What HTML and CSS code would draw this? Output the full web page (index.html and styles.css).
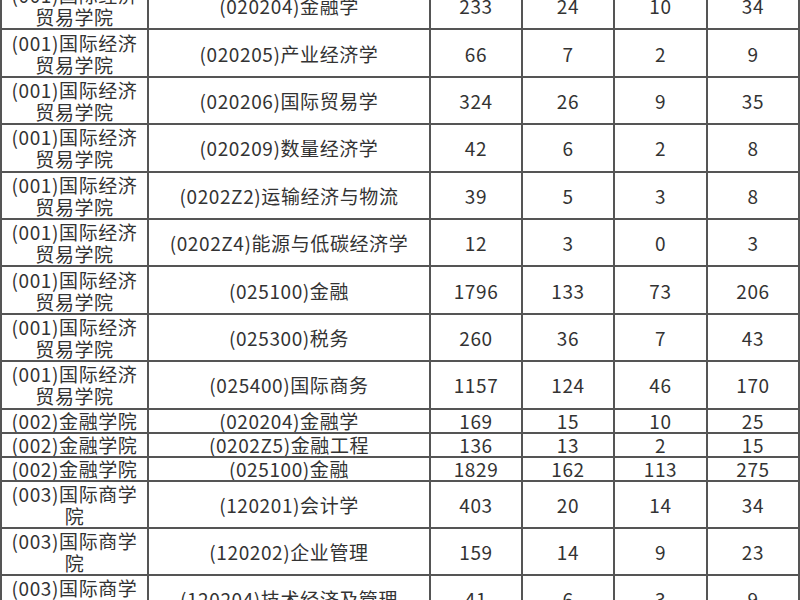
FILE: index.html
```html
<!DOCTYPE html>
<html lang="zh-CN">
<head>
<meta charset="utf-8">
<title>招生统计表</title>
<link rel="stylesheet" href="styles.css">
</head>
<body>
<table class="stats">
  <colgroup>
    <col class="c-school">
    <col class="c-major">
    <col class="c-num">
    <col class="c-num">
    <col class="c-num2">
    <col class="c-num">
  </colgroup>
  <tbody>
    <tr class="tall"><td>(001)国际经济<br>贸易学院</td><td>(020204)金融学</td><td>233</td><td>24</td><td>10</td><td>34</td></tr>
    <tr class="tall"><td>(001)国际经济<br>贸易学院</td><td>(020205)产业经济学</td><td>66</td><td>7</td><td>2</td><td>9</td></tr>
    <tr class="tall"><td>(001)国际经济<br>贸易学院</td><td>(020206)国际贸易学</td><td>324</td><td>26</td><td>9</td><td>35</td></tr>
    <tr class="tall"><td>(001)国际经济<br>贸易学院</td><td>(020209)数量经济学</td><td>42</td><td>6</td><td>2</td><td>8</td></tr>
    <tr class="tall"><td>(001)国际经济<br>贸易学院</td><td>(0202Z2)运输经济与物流</td><td>39</td><td>5</td><td>3</td><td>8</td></tr>
    <tr class="tall"><td>(001)国际经济<br>贸易学院</td><td>(0202Z4)能源与低碳经济学</td><td>12</td><td>3</td><td>0</td><td>3</td></tr>
    <tr class="tall"><td>(001)国际经济<br>贸易学院</td><td>(025100)金融</td><td>1796</td><td>133</td><td>73</td><td>206</td></tr>
    <tr class="tall"><td>(001)国际经济<br>贸易学院</td><td>(025300)税务</td><td>260</td><td>36</td><td>7</td><td>43</td></tr>
    <tr class="tall"><td>(001)国际经济<br>贸易学院</td><td>(025400)国际商务</td><td>1157</td><td>124</td><td>46</td><td>170</td></tr>
    <tr class="short"><td>(002)金融学院</td><td>(020204)金融学</td><td>169</td><td>15</td><td>10</td><td>25</td></tr>
    <tr class="short"><td>(002)金融学院</td><td>(0202Z5)金融工程</td><td>136</td><td>13</td><td>2</td><td>15</td></tr>
    <tr class="short"><td>(002)金融学院</td><td>(025100)金融</td><td>1829</td><td>162</td><td>113</td><td>275</td></tr>
    <tr class="tall"><td>(003)国际商学<br>院</td><td>(120201)会计学</td><td>403</td><td>20</td><td>14</td><td>34</td></tr>
    <tr class="tall"><td>(003)国际商学<br>院</td><td>(120202)企业管理</td><td>159</td><td>14</td><td>9</td><td>23</td></tr>
    <tr class="tall"><td>(003)国际商学<br>院</td><td>(120204)技术经济及管理</td><td>41</td><td>6</td><td>3</td><td>9</td></tr>
  </tbody>
</table>
</body>
</html>
```
FILE: styles.css
```css
html, body {
  margin: 0;
  padding: 0;
  background: #ffffff;
  overflow: hidden;
}

.stats {
  margin-top: -19px;
  width: 798px;
  table-layout: fixed;
  border-collapse: collapse;
  font-family: "Noto Sans CJK SC", "Noto Sans", sans-serif;
  font-size: 19px;
  line-height: 22px;
  letter-spacing: 0.6px;
  color: #333333;
}

.c-school { width: 147px; }
.c-major { width: 282px; }
.c-num { width: 92px; }
.c-num2 { width: 93px; }

.stats td {
  border: 2px solid #555555;
  padding: 1px 0 0 0;
  text-align: center;
  vertical-align: middle;
  white-space: nowrap;
  overflow: hidden;
}

.tall { height: 47.4px; }
.short { height: 24px; }
.short td { padding-top: 0; }
```
